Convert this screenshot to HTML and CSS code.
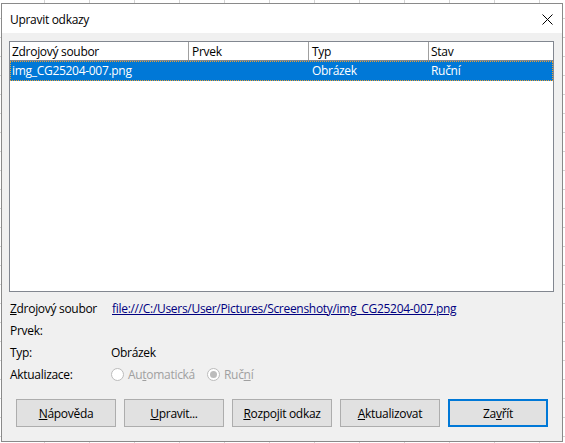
FILE: index.html
```html
<!DOCTYPE html>
<html lang="cs">
<head>
<meta charset="utf-8">
<title>Upravit odkazy</title>
<link rel="stylesheet" href="styles.css">
</head>
<body>
<div class="dialog">
  <div class="titlebar">
    <span class="title">Upravit odkazy</span>
    <span class="close">
      <svg width="11" height="11" viewBox="0 0 11 11"><path d="M0.5 0.5 L10.5 10.5 M10.5 0.5 L0.5 10.5" stroke="#000" stroke-width="1" fill="none"/></svg>
    </span>
  </div>
  <div class="content">
    <div class="list">
      <div class="list-head">
        <div class="cell c1">Zdrojový soubor</div>
        <div class="cell c2">Prvek</div>
        <div class="cell c3">Typ</div>
        <div class="cell c4">Stav</div>
      </div>
      <div class="list-row selected">
        <div class="cell c1">img_CG25204-007.png</div>
        <div class="cell c2"></div>
        <div class="cell c3">Obrázek</div>
        <div class="cell c4">Ruční</div>
      </div>
    </div>
    <div class="props">
      <div class="prop">
        <span class="label"><u>Z</u>drojový soubor</span>
        <a class="value link" href="#">file:///C:/Users/User/Pictures/Screenshoty/img_CG25204-007.png</a>
      </div>
      <div class="prop">
        <span class="label">Prvek:</span>
        <span class="value"></span>
      </div>
      <div class="prop">
        <span class="label">Typ:</span>
        <span class="value">Obrázek</span>
      </div>
      <div class="prop">
        <span class="label">Aktualizace:</span>
        <span class="value radios">
          <span class="radio"><span class="dot"></span><span class="radio-text">Au<u>t</u>omatická</span></span>
          <span class="radio checked"><span class="dot"></span><span class="radio-text">Ruč<u>n</u>í</span></span>
        </span>
      </div>
    </div>
    <div class="buttons">
      <button class="btn"><u>N</u>ápověda</button>
      <button class="btn"><u>U</u>pravit...</button>
      <button class="btn"><u>R</u>ozpojit odkaz</button>
      <button class="btn"><u>A</u>ktualizovat</button>
      <button class="btn default">Za<u>v</u>řít</button>
    </div>
  </div>
</div>
</body>
</html>
```
FILE: styles.css
```css
* { box-sizing: border-box; }

html, body {
  margin: 0;
  width: 565px;
  height: 443px;
  overflow: hidden;
}

/* spreadsheet grid peeking out behind the window */
body {
  background-color: #fff;
  background-image:
    repeating-linear-gradient(to right, transparent 0 44px, #d4d4d4 44px 45px),
    repeating-linear-gradient(to bottom, transparent 0 18px, #d4d4d4 18px 19px);
  font-family: "Open Sans", "Liberation Sans", sans-serif;
  font-size: 12px;
  letter-spacing: -0.3px;
  color: #000;
}

.dialog {
  margin: 3px 0 0 1px;
  width: 562px;
  height: 439px;
  border: 1px solid #8a8a8a;
  background: #f0f0f0;
  display: flex;
  flex-direction: column;
}

.titlebar {
  height: 29px;
  background: #fff;
  display: flex;
  align-items: center;
  justify-content: space-between;
  padding: 2px 9px 0 8px;
  flex: none;
}

.close {
  display: flex;
  width: 11px;
  height: 11px;
}

.content {
  padding: 8px 8px 0 7px;
  display: flex;
  flex-direction: column;
}

.list {
  width: 545px;
  height: 251px;
  border: 1px solid #828790;
  background: #fff;
}

.list-head, .list-row {
  display: flex;
}

.list-head {
  height: 19px;
  border-bottom: 1px solid #828790;
}

.list-head .cell {
  border-right: 1px solid #a0a0a0;
  line-height: 19px;
}

.list-head .c4 { border-right: none; }

.cell {
  padding-left: 2px;
  line-height: 20px;
  white-space: nowrap;
  overflow: hidden;
}

.c1 { width: 179px; }
.c2 { width: 120px; padding-left: 3px; }
.c3 { width: 120px; padding-left: 3px; }
.c4 { flex: 1; padding-left: 2px; }

.list-row {
  height: 20px;
}

.list-row.selected {
  background: #0078d7;
  color: #fff;
  outline: 1px dotted #f0a030;
  outline-offset: -1px;
}

.props {
  padding-top: 5px;
  display: flex;
  flex-direction: column;
}

.prop {
  height: 22px;
  display: flex;
  align-items: center;
  padding-left: 1px;
}

.label {
  width: 100px;
  flex: none;
}

.value { padding-left: 1px; }

.link {
  color: #000080;
  text-decoration: underline;
  padding-left: 2px;
}

.radios {
  display: flex;
  gap: 12px;
  color: #a0a0a0;
}

.radio {
  display: flex;
  align-items: center;
  gap: 4px;
}

.dot {
  width: 13px;
  height: 13px;
  border-radius: 50%;
  border: 1px solid #bcbcbc;
  background: #fff;
  display: flex;
  align-items: center;
  justify-content: center;
}

.checked .dot::after {
  content: "";
  width: 7px;
  height: 7px;
  border-radius: 50%;
  background: #bcbcbc;
}

.buttons {
  display: flex;
  gap: 8px;
  padding: 14px 0 0 7px;
}

.btn {
  width: 100px;
  height: 28px;
  border: 1px solid #adadad;
  background: #e1e1e1;
  font-family: inherit;
  font-size: 12px;
  letter-spacing: inherit;
  color: #000;
  padding: 0;
}

.btn.default {
  border: 2px solid #0078d7;
}
```
